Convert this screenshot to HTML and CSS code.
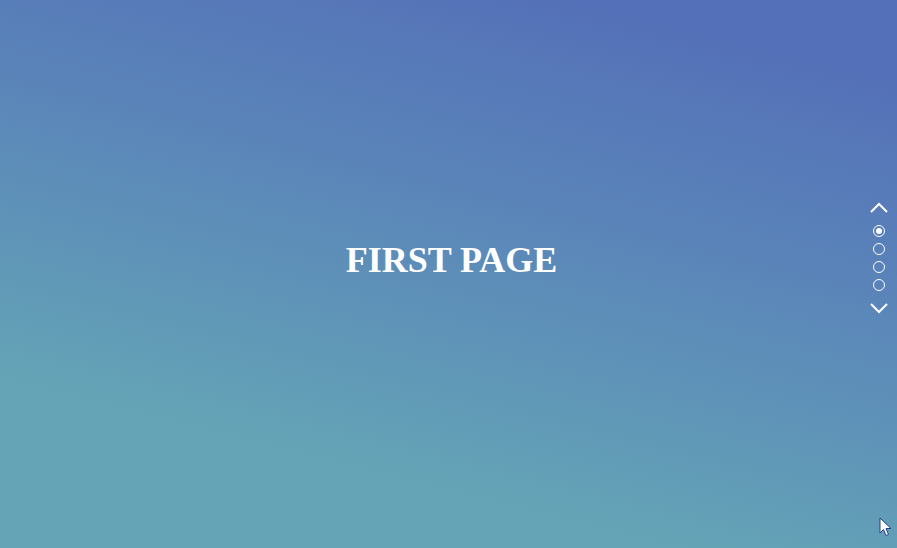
FILE: index.html
```html
<!DOCTYPE html>
<html>
<head>
<meta charset="utf-8">
<link rel="stylesheet" href="styles.css">
</head>
<body>
<main class="page">
  <section class="slide">
    <h1 class="title">FIRST PAGE</h1>
  </section>
</main>
<nav class="pager">
  <svg class="arrow" width="20" height="12" viewBox="0 0 20 12"><path d="M2 10 L10 2 L18 10" fill="none" stroke="#fff" stroke-width="2"/></svg>
  <ul class="dots">
    <li class="dot active"></li>
    <li class="dot"></li>
    <li class="dot"></li>
    <li class="dot"></li>
  </ul>
  <svg class="arrow" width="20" height="12" viewBox="0 0 20 12"><path d="M2 2 L10 10 L18 2" fill="none" stroke="#fff" stroke-width="2"/></svg>
</nav>
<svg class="cursor" width="14" height="20" viewBox="0 0 14 20"><path d="M1 1 L1 16 L4.5 12.5 L7 18.5 L9.5 17.5 L7 11.5 L12 11.5 Z" fill="#fff" stroke="#2a3f8a" stroke-width="1"/></svg>
</body>
</html>
```
FILE: styles.css
```css
html, body {
  margin: 0;
  padding: 0;
  height: 100%;
  overflow: hidden;
}
body {
  font-family: "Liberation Serif", "Times New Roman", serif;
}
.page {
  height: 100%;
}
.slide {
  height: 100%;
  display: flex;
  align-items: center;
  justify-content: center;
  background: linear-gradient(14deg, #64a4b6 22%, #5b87b9 58%, #5470b8 90%);
}
.title {
  margin: 0 0 28px 6px;
  color: #fff;
  font-size: 36px;
  font-weight: bold;
  line-height: 1;
}
.pager {
  position: fixed;
  right: 8px;
  top: 202px;
  display: flex;
  flex-direction: column;
  align-items: center;
  width: 20px;
}
.arrow {
  display: block;
}
.dots {
  list-style: none;
  margin: 11px 0;
  padding: 0;
  display: flex;
  flex-direction: column;
  align-items: center;
  gap: 6px;
}
.dot {
  box-sizing: border-box;
  width: 12px;
  height: 12px;
  border: 1.3px solid #fff;
  border-radius: 50%;
  position: relative;
}
.dot.active::after {
  content: "";
  position: absolute;
  left: 1.7px;
  top: 1.7px;
  width: 6px;
  height: 6px;
  border-radius: 50%;
  background: #fff;
}
.cursor {
  position: fixed;
  left: 879px;
  top: 517px;
}
```
